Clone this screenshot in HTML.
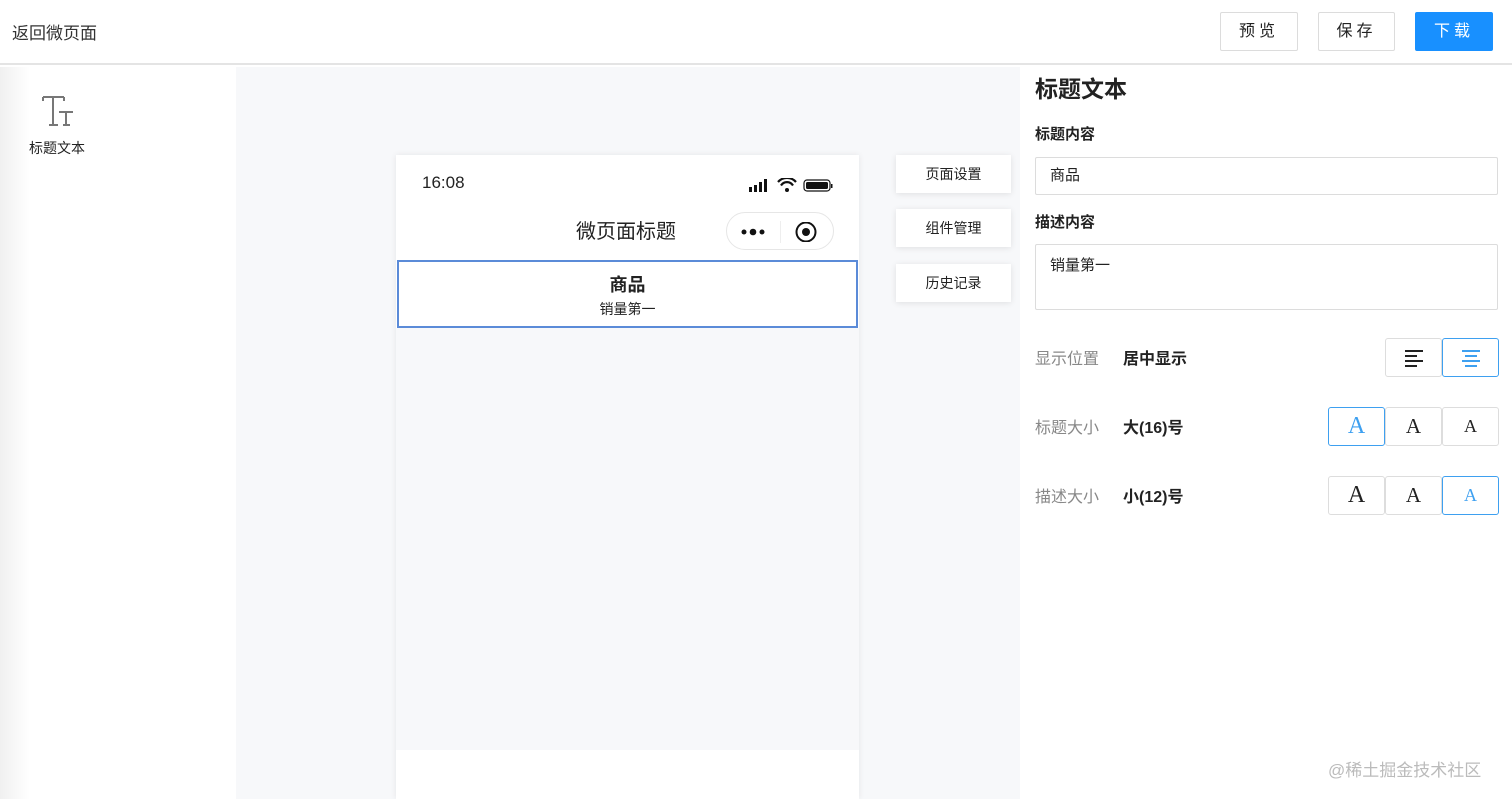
<!DOCTYPE html>
<html><head><meta charset="utf-8"><style>
*{box-sizing:border-box;margin:0;padding:0}
body{width:1512px;height:799px;overflow:hidden;position:relative;background:#fff;font-family:"Liberation Sans","Noto Sans CJK SC",sans-serif;color:#222}
.a{position:absolute}
.hdr{left:0;top:0;width:1512px;height:65px;background:#fff;border-bottom:2px solid #e4e4e4}
.btn{top:12px;height:39px;border:1px solid #dcdcdc;border-radius:2px;font-size:16px;line-height:37px;text-align:center;letter-spacing:4px;background:#fff}
.tab{left:896px;width:115px;height:38px;background:#fff;box-shadow:0 1px 6px rgba(0,0,0,.1);font-size:14px;line-height:38px;text-align:center}
.lbl{font-size:15px;font-weight:bold;color:#222}
.inp{left:1035px;width:463px;border:1px solid #dcdcdc;border-radius:2px;font-size:15px;padding-left:14px}
.sb{width:57px;height:39px;border:1px solid #ddd;border-radius:3px;background:#fff;text-align:center;font-family:"Liberation Serif",serif;color:#222}
.sel{border-color:#3ea0f0;color:#3ea0f0}
.rl{left:1035px;font-size:16px;color:#888}
.rv{left:1123px;font-size:16px;font-weight:bold;color:#222}
</style></head><body>
<div class="a hdr"></div>
<div class="a" style="left:12px;top:19px;font-size:17px;color:#333">返回微页面</div>
<div class="a btn" style="left:1220px;width:78px">预览</div>
<div class="a btn" style="left:1318px;width:77px">保存</div>
<div class="a btn" style="left:1415px;width:78px;background:#1890ff;border-color:#1890ff;color:#fff">下载</div>

<div class="a" style="left:0;top:67px;width:30px;height:732px;background:linear-gradient(90deg,#f0f0f0,#fff)"></div>
<svg class="a" style="left:40px;top:95px" width="36" height="32" viewBox="0 0 36 32"><g stroke="#777" stroke-width="2" fill="none"><path d="M3 2H24M13 2V30M9 30H18M3 2v4M24 2v4"/><path d="M19 17H33M26 17V30M23 30H30"/></g></svg>
<div class="a" style="left:29px;top:138px;font-size:14px;color:#222">标题文本</div>

<div class="a" style="left:236px;top:67px;width:784px;height:732px;background:#f7f8fa"></div>
<div class="a" style="left:396px;top:155px;width:463px;height:644px;background:#fff;box-shadow:0 0 6px rgba(0,0,0,.08)"></div>
<div class="a" style="left:396px;top:328px;width:463px;height:422px;background:#f7f8fa"></div>
<div class="a" style="left:422px;top:173px;font-size:17px">16:08</div>
<svg class="a" style="left:748px;top:178px" width="86" height="16"><rect x="1" y="9" width="3" height="5" fill="#111"/><rect x="6" y="7" width="3" height="7" fill="#111"/><rect x="11" y="4" width="3" height="10" fill="#111"/><rect x="16" y="1" width="3" height="13" fill="#111"/><path d="M30 4a12 12 0 0 1 18 0" stroke="#111" stroke-width="2.2" fill="none"/><path d="M33 7.5a7 7 0 0 1 12 0" stroke="#111" stroke-width="2.2" fill="none"/><circle cx="39" cy="12" r="2" fill="#111"/><rect x="56" y="2" width="26" height="11" rx="3" fill="none" stroke="#111" stroke-width="1.2"/><rect x="58" y="4" width="22" height="7" rx="1.5" fill="#111"/><rect x="83" y="6" width="1.5" height="4" fill="#111"/></svg>
<div class="a" style="left:576px;top:215px;font-size:20px;color:#222">微页面标题</div>
<div class="a" style="left:726px;top:212px;width:108px;height:38px;border:1px solid #e6e6e6;border-radius:19px;background:#fff"></div>
<div class="a" style="left:780px;top:221px;width:1px;height:22px;background:#eee"></div>
<svg class="a" style="left:740px;top:222px" width="90" height="20"><circle cx="4" cy="10" r="2.5" fill="#111"/><circle cx="13" cy="10" r="3.3" fill="#111"/><circle cx="22" cy="10" r="2.5" fill="#111"/><circle cx="66" cy="10" r="9.5" fill="none" stroke="#111" stroke-width="2"/><circle cx="66" cy="10" r="4" fill="#111"/></svg>
<div class="a" style="left:397px;top:260px;width:461px;height:68px;border:2px solid #5b8bd8;background:#fff"></div>
<div class="a" style="left:396px;top:271px;width:463px;text-align:center;font-size:18px;font-weight:bold">商品</div>
<div class="a" style="left:396px;top:299px;width:463px;text-align:center;font-size:14px">销量第一</div>

<div class="a tab" style="top:155px">页面设置</div>
<div class="a tab" style="top:209px">组件管理</div>
<div class="a tab" style="top:264px">历史记录</div>

<div class="a" style="left:1035px;top:70px;font-size:23px;font-weight:bold">标题文本</div>
<div class="a lbl" style="left:1035px;top:123px">标题内容</div>
<div class="a inp" style="top:157px;height:38px;line-height:36px">商品</div>
<div class="a lbl" style="left:1035px;top:211px">描述内容</div>
<div class="a inp" style="top:244px;height:66px;padding-top:9px">销量第一</div>

<div class="a rl" style="top:345px">显示位置</div><div class="a rv" style="top:345px">居中显示</div>
<div class="a sb" style="left:1385px;top:338px"><svg width="20" height="20" style="margin-top:9px" viewBox="0 0 20 20"><path d="M1 3h18M1 8h12M1 13h18M1 18h12" stroke="#222" stroke-width="2"/></svg></div>
<div class="a sb sel" style="left:1442px;top:338px"><svg width="20" height="20" style="margin-top:9px" viewBox="0 0 20 20"><path d="M1 3h18M4 8h12M1 13h18M4 18h12" stroke="#3ea0f0" stroke-width="2"/></svg></div>

<div class="a rl" style="top:414px">标题大小</div><div class="a rv" style="top:414px">大(16)号</div>
<div class="a sb sel" style="left:1328px;top:407px;font-size:24px;line-height:37px">A</div>
<div class="a sb" style="left:1385px;top:407px;font-size:21px;line-height:37px">A</div>
<div class="a sb" style="left:1442px;top:407px;font-size:18px;line-height:37px">A</div>

<div class="a rl" style="top:483px">描述大小</div><div class="a rv" style="top:483px">小(12)号</div>
<div class="a sb" style="left:1328px;top:476px;font-size:24px;line-height:37px">A</div>
<div class="a sb" style="left:1385px;top:476px;font-size:21px;line-height:37px">A</div>
<div class="a sb sel" style="left:1442px;top:476px;font-size:18px;line-height:37px">A</div>

<div class="a" style="left:1328px;top:756px;font-size:17px;color:#bbb">@稀土掘金技术社区</div>
</body></html>
